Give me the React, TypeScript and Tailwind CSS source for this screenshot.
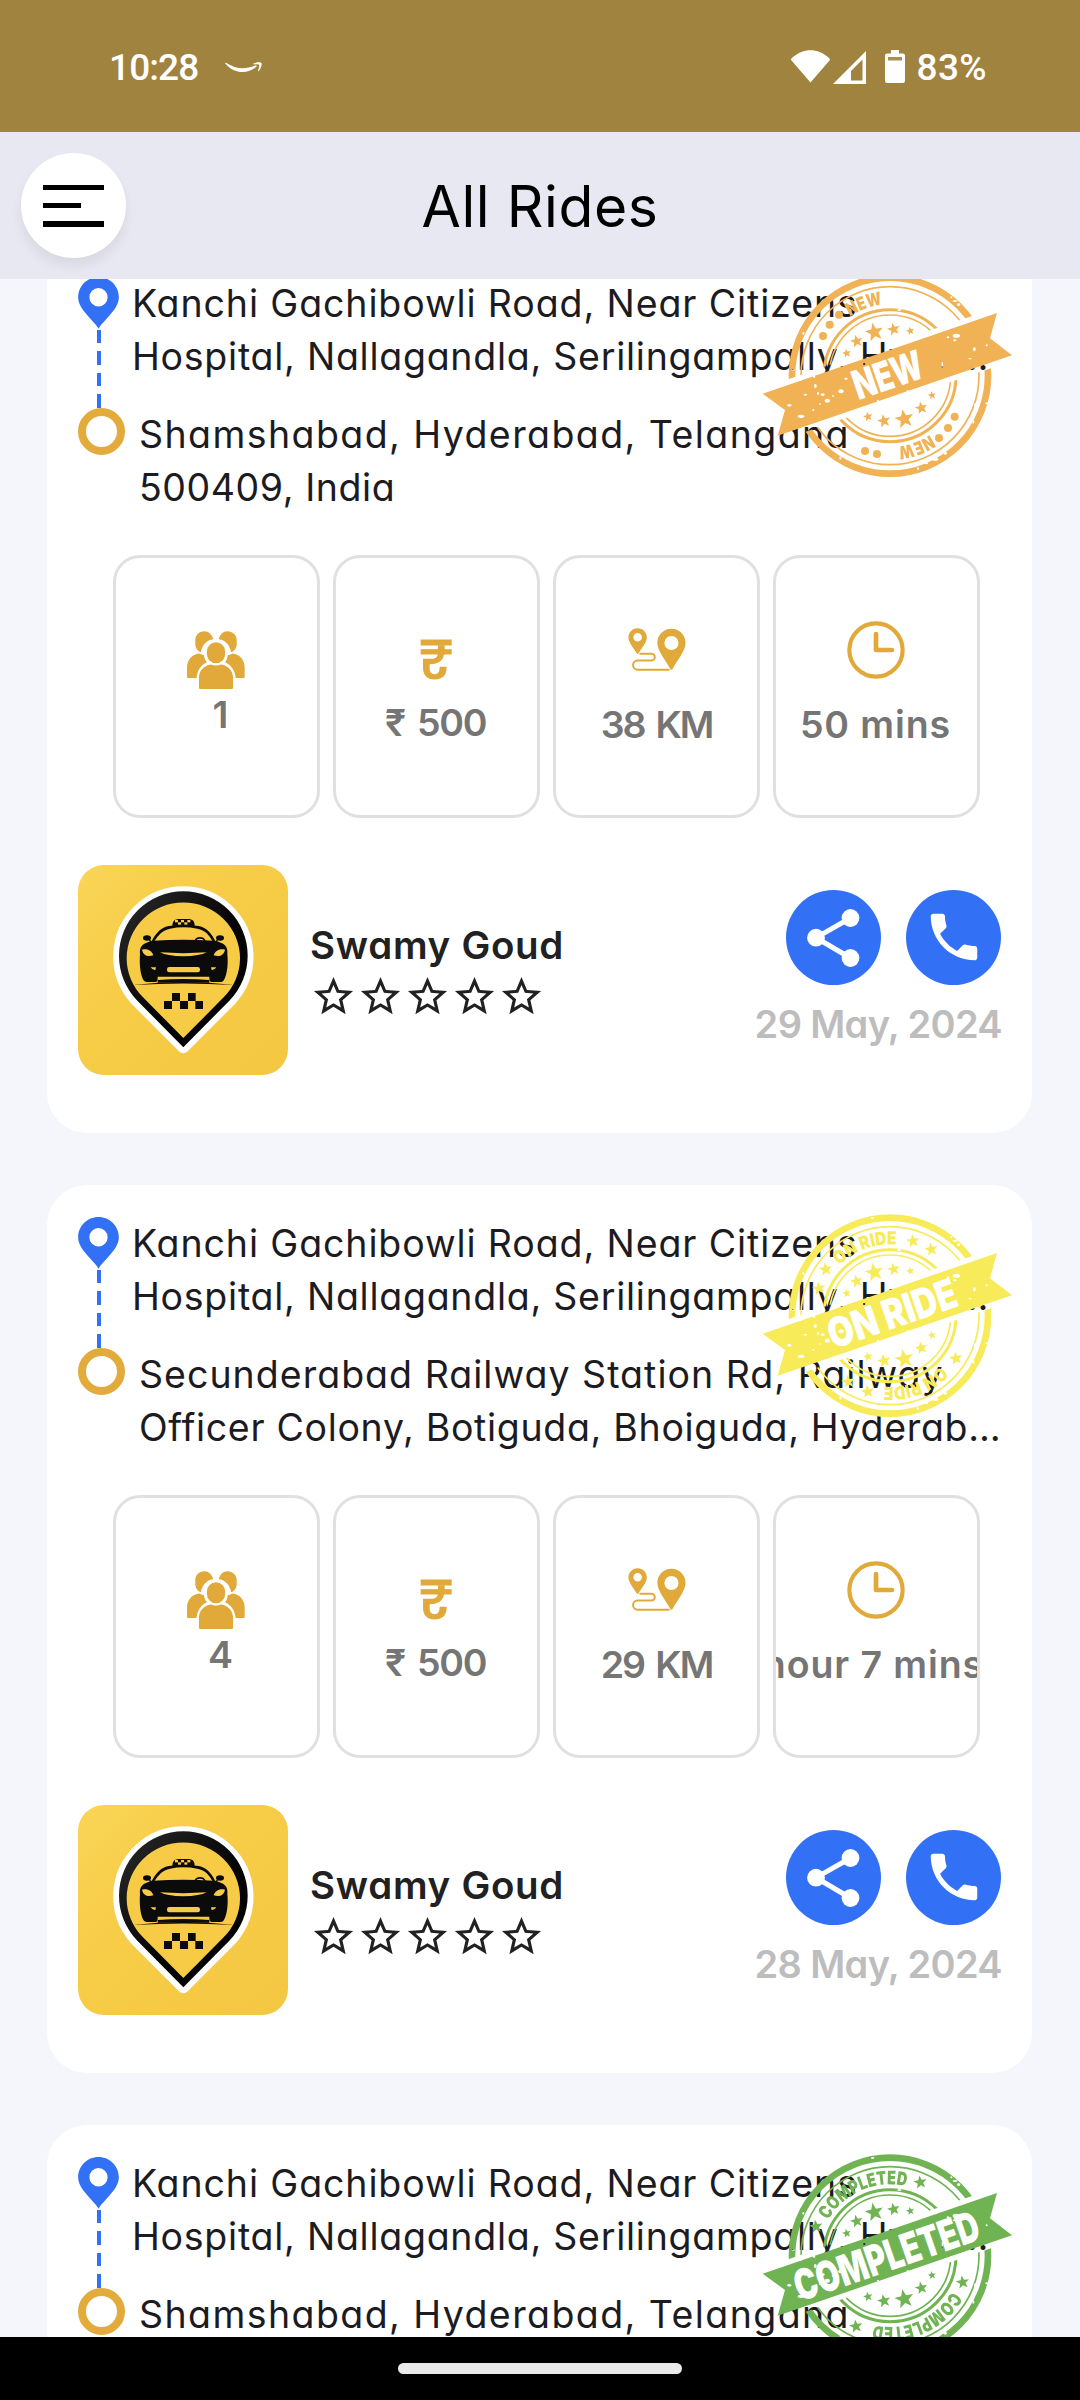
import React from 'react';

type StampKind = 'new' | 'onride' | 'completed';

interface Line {
  text: string;
  tracking: string;
}

interface Ride {
  id: string;
  stamp: StampKind;
  to: Line[];
  seats: string;
  fare: string;
  distance: Line;
  duration: Line;
  date: string;
}

const FROM: Line[] = [
  { text: 'Kanchi Gachibowli Road, Near Citizens', tracking: 'tracking-[0.89px]' },
  { text: 'Hospital, Nallagandla, Serilingampally, Hyde…', tracking: 'tracking-[0.74px]' },
];

const SHAMSHABAD: Line[] = [
  { text: 'Shamshabad, Hyderabad, Telangana', tracking: 'tracking-[1.42px]' },
  { text: '500409, India', tracking: 'tracking-[0.56px]' },
];

const RIDES: Ride[] = [
  {
    id: 'a',
    stamp: 'new',
    to: SHAMSHABAD,
    seats: '1',
    fare: '500',
    distance: { text: '38 KM', tracking: 'tracking-[-2.2px] [word-spacing:4px]' },
    duration: { text: '50 mins', tracking: 'tracking-[0.9px]' },
    date: '29 May, 2024',
  },
  {
    id: 'b',
    stamp: 'onride',
    to: [
      { text: 'Secunderabad Railway Station Rd, Railway', tracking: 'tracking-[1.02px]' },
      { text: 'Officer Colony, Botiguda, Bhoiguda, Hyderab…', tracking: 'tracking-[0.68px]' },
    ],
    seats: '4',
    fare: '500',
    distance: { text: '29 KM', tracking: 'tracking-[-2.1px] [word-spacing:4px]' },
    duration: { text: '1 hour 7 mins', tracking: 'tracking-[0.9px] self-end translate-x-[9px]' },
    date: '28 May, 2024',
  },
  {
    id: 'c',
    stamp: 'completed',
    to: SHAMSHABAD,
    seats: '1',
    fare: '500',
    distance: { text: '38 KM', tracking: 'tracking-[-2.2px] [word-spacing:4px]' },
    duration: { text: '50 mins', tracking: 'tracking-[0.9px]' },
    date: '28 May, 2024',
  },
];

/* ---------- stamp ---------- */

interface StampSpec {
  color: string;
  label: string;
  x: number;
  y: number;
  length: number;
  size: number;
  ringStart: number;
  ringSpan: number;
  ringSize: number;
  ringStars: [number, number][];
  ringDots: [number, number][];
}

const STAMPS: Record<StampKind, StampSpec> = {
  new: {
    color: '#f0b254',
    label: 'NEW',
    x: 443,
    y: 374,
    length: 216,
    size: 122,
    ringStart: -34,
    ringSpan: 28,
    ringSize: 54,
    ringStars: [],
    ringDots: [[249, 258], [269, 224], [297, 194], [597, 564], [624, 534], [644, 500], [375, 603], [411, 612]],
  },
  onride: {
    color: '#f7eb5a',
    label: 'ON RIDE',
    x: 456,
    y: 370,
    length: 402,
    size: 124,
    ringStart: -45,
    ringSpan: 50,
    ringSize: 54,
    ringStars: [[237, 295], [257, 238], [519, 153], [574, 178], [648, 505], [383, 605], [325, 575]],
    ringDots: [],
  },
  completed: {
    color: '#6fb353',
    label: 'COMPLETED',
    x: 439,
    y: 377,
    length: 580,
    size: 128,
    ringStart: -60,
    ringSpan: 73,
    ringSize: 56,
    ringStars: [[228, 290], [541, 157], [668, 457], [348, 589]],
    ringDots: [],
  },
};

const INNER_STARS: [number, number, number][] = [
  [320, 310, 14], [350, 274, 20], [403, 247, 29], [461, 238, 20], [511, 243, 13],
  [384, 500, 15], [432, 513, 21], [493, 507, 30], [544, 474, 20], [576, 436, 13],
];

const SPECKS: [number, number, number, number][] = [
  [148, 466, 6, 4], [183, 499, 10, 5], [196, 434, 5, 3], [226, 408, 4, 6], [248, 434, 6, 4], [262, 452, 8, 6],
  [181, 390, 5, 3], [222, 380, 4, 3], [234, 430, 3, 5], [279, 438, 4, 2], [303, 424, 8, 6], [318, 386, 5, 3],
  [220, 480, 3, 3], [649, 257, 11, 6], [703, 298, 4, 6], [740, 286, 3, 3], [624, 262, 4, 3], [607, 344, 2, 9],
  [690, 326, 5, 2], [644, 271, 5, 3], [414, 452, 3, 3], [503, 424, 3, 4], [372, 342, 4, 3], [240, 462, 3, 2],
  [645, 153, 7, 3], [656, 164, 5, 4], [634, 142, 3, 3], [301, 624, 3, 5], [534, 656, 3, 4], [398, 84, 5, 3],
  [586, 628, 9, 5], [740, 460, 4, 3], [700, 516, 3, 5], [560, 640, 4, 3], [478, 180, 6, 3], [190, 250, 3, 4],
  [160, 360, 4, 2], [616, 610, 5, 4], [706, 466, 4, 6],
];

function starPoints(cx: number, cy: number, r: number, turn: number) {
  return Array.from({ length: 10 }, (_, i) => {
    const a = ((i * 36 + turn) * Math.PI) / 180;
    const d = i % 2 === 0 ? r : r * 0.42;
    return `${(cx + d * Math.sin(a)).toFixed(1)},${(cy - d * Math.cos(a)).toFixed(1)}`;
  }).join(' ');
}

const BANNER = '68,431 771,189 750,265 816,316 113,557 135,480';

function Stamp({ kind, id }: { kind: StampKind; id: string }) {
  const s = STAMPS[kind];
  const at = (deg: number) => {
    const a = (deg * Math.PI) / 180;
    return `${(450 + 214 * Math.sin(a)).toFixed(1)} ${(377 - 214 * Math.cos(a)).toFixed(1)}`;
  };
  const span = (214 * s.ringSpan * Math.PI) / 180;
  const ringText = (
    <text
      fill={s.color}
      fontSize={s.ringSize}
      textLength={span}
      lengthAdjust="spacingAndGlyphs"
      className="font-['Inter'] font-black"
    >
      <textPath href={`#arc-${id}`} textLength={span} lengthAdjust="spacingAndGlyphs">
        {s.label}
      </textPath>
    </text>
  );
  return (
    <svg viewBox="0 0 900 750" className="absolute left-[693px] top-[5px] h-[250px] w-[300px]">
      <defs>
        <path id={`arc-${id}`} d={`M${at(s.ringStart)} A214 214 0 0 1 ${at(s.ringStart + 130)}`} />
        <mask id={`rings-${id}`} maskUnits="userSpaceOnUse" x="0" y="0" width="900" height="750">
          <rect width="900" height="750" fill="white" />
          <polygon points={BANNER} fill="black" stroke="black" strokeWidth="32" />
        </mask>
        <mask id={`grunge-${id}`} maskUnits="userSpaceOnUse" x="0" y="0" width="900" height="750">
          <rect width="900" height="750" fill="white" />
          {SPECKS.map(([x, y, rx, ry], i) => (
            <ellipse key={i} cx={x} cy={y} rx={rx} ry={ry} fill="black" />
          ))}
        </mask>
      </defs>
      <g mask={`url(#grunge-${id})`}>
        <g mask={`url(#rings-${id})`}>
          <g fill="none" stroke={s.color}>
            <circle cx="450" cy="377" r="294" strokeWidth="20" />
            <circle cx="450" cy="377" r="267" strokeWidth="5" />
            <circle cx="450" cy="377" r="198" strokeWidth="9" />
            <circle cx="450" cy="377" r="182" strokeWidth="5" />
          </g>
          <g fill={s.color}>
            {INNER_STARS.map(([x, y, r]) => (
              <polygon key={x} points={starPoints(x, y, r, -12)} />
            ))}
            {s.ringStars.map(([x, y]) => (
              <polygon key={x} points={starPoints(x, y, 21, -8)} />
            ))}
            {s.ringDots.map(([x, y]) => (
              <circle key={x} cx={x} cy={y} r="12" />
            ))}
          </g>
        </g>
        {ringText}
        <g transform="rotate(180 450 377)">{ringText}</g>
        <polygon points={BANNER} fill={s.color} />
      </g>
      <text
        transform={`translate(${s.x} ${s.y}) rotate(-19)`}
        y={s.size * 0.363}
        textAnchor="middle"
        textLength={s.length}
        lengthAdjust="spacingAndGlyphs"
        fontSize={s.size}
        fill="white"
        className="font-['Inter'] font-black"
      >
        {s.label}
      </text>
    </svg>
  );
}

/* ---------- icons ---------- */

function PinIcon() {
  return (
    <svg viewBox="0 0 41 52" className="h-[52px] w-[41px]">
      <path
        fill="#3270f6"
        fillRule="evenodd"
        d="M20.5 0C9 0 0 9.2 0 20.5C0 28 5 34 11 40.5C15.5 45.5 18.5 48.5 20.5 52C22.5 48.5 25.5 45.5 30 40.5C36 34 41 28 41 20.5C41 9.2 32 0 20.5 0ZM20.5 11.2a9.2 9.2 0 1 1 0 18.4a9.2 9.2 0 1 1 0-18.4Z"
      />
    </svg>
  );
}

function PeopleIcon() {
  return (
    <svg viewBox="261 272 175 175" className="h-[58px] w-[58px] shrink-0" fill="#e0a93a">
      <path d="M313 273C298 273 286 284 286 299V311C286 323 293 333 303 336C306 316 320 299 340 297C337 283 326 273 313 273Z" />
      <path d="M383 273C398 273 411 284 411 299V311C411 323 404 333 394 336C391 316 377 299 357 297C360 283 370 273 383 273Z" />
      <path d="M298 340C276 342 261 360 261 382V411Q261 414 264 414H290C291 392 303 374 321 366C316 359 313 352 312 345Q305 344 298 340Z" />
      <path d="M399 340C420 342 435 360 435 382V411Q435 414 432 414H408C406 392 394 374 376 366C381 359 383 352 384 345Q392 344 399 340Z" />
      <rect x="321" y="306" width="55" height="63" rx="27.5" />
      <path d="M333 373Q348 379 364 373C385 376 400 392 400 414V443Q400 447 396 447H301Q297 447 297 443V414C297 392 312 376 333 373Z" />
    </svg>
  );
}

function RupeeIcon() {
  return (
    <svg viewBox="961 297 96 122" className="h-[41px] w-[32px] shrink-0" fill="#e0a93a">
      <rect x="963" y="298" width="93" height="18" />
      <rect x="963" y="327" width="93" height="16" />
      <path d="M1015 315H1035V342H1033C1030 361 1018 371 990 372V385C990 396 996 402 1005 402C1014 402 1020 396 1020 380H1041C1041 405 1030 418 1005 418C982 418 970 405 970 382V356H992C1006 356 1013 352 1014 342H1015Z" />
    </svg>
  );
}

function RouteIcon() {
  return (
    <svg viewBox="260 263 176 131" className="h-[43px] w-[58px] shrink-0" fill="#e0a93a">
      <path
        fillRule="evenodd"
        d="M289 264C273 264 261 276 261 292C261 307 278 326 286 340Q289 344 292 340C300 326 317 307 317 292C317 276 305 264 289 264ZM289 278a13 13 0 1 1 0 26a13 13 0 1 1 0-26Z"
      />
      <path
        fillRule="evenodd"
        d="M392 265C368 265 349 284 349 308C349 333 376 364 388 387Q392 393 396 387C408 364 435 333 435 308C435 284 416 265 392 265ZM392 287a21.5 21.5 0 1 1 0 43a21.5 21.5 0 1 1 0-43Z"
      />
      <path
        d="M297 341.5H331a10 10 0 0 1 0 20.5H289a14 14 0 0 0 0 28H384"
        fill="none"
        stroke="#e0a93a"
        strokeWidth="6"
        strokeLinecap="round"
      />
    </svg>
  );
}

function ClockIcon() {
  return (
    <svg viewBox="923 242 173 173" className="h-[58px] w-[58px] shrink-0" fill="none" stroke="#e0a93a">
      <circle cx="1009.5" cy="328.5" r="79.5" strokeWidth="12.5" />
      <path d="M1009.5 281V328.5H1057" strokeWidth="14" strokeLinecap="round" strokeLinejoin="round" />
    </svg>
  );
}

function StarOutline() {
  return (
    <svg viewBox="0 0 24 24" className="size-[47px] shrink-0" fill="#212121">
      <path d="M22 9.24l-7.19-.62L12 2 9.19 8.63 2 9.24l5.46 4.73L5.82 21 12 17.27 18.18 21l-1.63-7.03L22 9.24zM12 15.4l-3.76 2.27 1-4.28-3.32-2.88 4.38-.38L12 6.1l1.71 4.04 4.38.38-3.32 2.88 1 4.28L12 15.4z" />
    </svg>
  );
}

function TaxiAvatar({ id }: { id: string }) {
  return (
    <div className="size-[210px] overflow-hidden rounded-[26px] bg-linear-to-br from-[#f9d557] via-[#f7cc47] via-40% to-[#f4c741]">
      <svg viewBox="-66 -45 630 630" className="size-full">
        <defs>
          <linearGradient id={`ink-${id}`} x1="0" y1="0" x2="1" y2="1">
            <stop offset="0" stopColor="#2b2b2b" />
            <stop offset="0.55" stopColor="#050505" />
            <stop offset="1" stopColor="#000" />
          </linearGradient>
        </defs>
        <path
          d="M250 502L106 358A193 193 0 1 1 394 358Z"
          fill="#fff"
          stroke="#fff"
          strokeWidth="35"
          strokeLinejoin="round"
        />
        <path d="M250 502L112 362A193 193 0 1 1 388 362Z" fill={`url(#ink-${id})`} />
        <path d="M250 474L129 352A170 167 0 1 1 371 352Z" fill="#f7cb46" />
        <g fill="#0b0b0b">
          <path d="M120 222C118 206 124 196 136 190Q146 184 160 182Q250 177 341 182Q356 184 366 190C378 196 384 206 382 222C385 250 382 282 372 300Q369 306 362 306H338Q328 306 328 296V290H173V296Q173 306 164 306H141Q134 306 130 300C120 282 118 250 120 222Z" />
          <path d="M154 186C166 162 182 142 206 138C236 134 266 134 296 138C320 142 336 162 347 186L338 184C328 166 316 150 292 146Q250 138 210 146C188 150 174 166 163 184Z" />
          <ellipse cx="141" cy="174" rx="12" ry="8" />
          <ellipse cx="360" cy="174" rx="12" ry="8" />
          <path d="M146 178L157 184L150 187Z" />
          <path d="M355 178L344 184L351 187Z" />
          <path d="M217 140C217 124 222 117 240 117H262C280 117 284 124 284 140Z" />
          <path d="M283 184a17 13 0 0 1 34 0h-5a12 8 0 0 0-24 0Z" />
          <path d="M173 300Q250 294 328 300V308H173Z" />
          <path d="M100 315Q250 297 402 315Q250 306 100 315Z" />
        </g>
        <g fill="#f7cb46">
          <path d="M126 209C142 204 156 212 160 226C144 230 130 228 126 209Z" />
          <path d="M375 209C359 204 345 212 341 226C357 230 371 228 375 209Z" />
          <path d="M180 217Q250 222 320 217Q300 228 250 229Q200 228 180 217Z" />
          <rect x="201" y="261" width="99" height="16" rx="7" />
          <path d="M152 262H168L166 270Q158 271 152 262Z" />
          <path d="M349 262H333L335 270Q343 271 349 262Z" />
          <rect x="225" y="120" width="9" height="7" />
          <rect x="243" y="120" width="9" height="7" />
          <rect x="262" y="120" width="9" height="7" />
          <rect x="234" y="127" width="9" height="7" />
          <rect x="253" y="127" width="9" height="7" />
        </g>
        <g fill="#0b0b0b">
          <rect x="216" y="339" width="24" height="24" />
          <rect x="264" y="339" width="23" height="24" />
          <rect x="192" y="363" width="24" height="24" />
          <rect x="240" y="363" width="24" height="24" />
          <rect x="286" y="363" width="23" height="24" />
        </g>
      </svg>
    </div>
  );
}

/* ---------- pieces ---------- */

function Lines({ lines }: { lines: Line[] }) {
  return (
    <div className="text-[37.5px] leading-[53px] text-[#1c1b1f]">
      {lines.map((l) => (
        <div key={l.text} className={`whitespace-nowrap ${l.tracking}`}>
          {l.text}
        </div>
      ))}
    </div>
  );
}

function StatBox({ pad, children }: { pad: string; children: React.ReactNode }) {
  return (
    <div
      className={`flex h-[263px] w-[207px] flex-col items-center overflow-hidden rounded-[27px] border-[3px] border-[#e0e0e0] text-[37.5px] leading-[48px] font-[560] whitespace-nowrap text-[#757575] ${pad}`}
    >
      {children}
    </div>
  );
}

function RideCard({ ride }: { ride: Ride }) {
  return (
    <article className="relative h-[888px] shrink-0 rounded-[40px] bg-white pt-[32px] pr-[32px] pl-[31px]">
      <div className="flex h-[131px]">
        <div className="flex w-[54px] shrink-0 flex-col">
          <PinIcon />
          <div className="mt-px ml-[19px] flex w-1 flex-col gap-2">
            <i className="h-[13.6px] bg-[#3270f6]" />
            <i className="h-[13.6px] bg-[#3270f6]" />
            <i className="h-[13.6px] bg-[#3270f6]" />
            <i className="h-[13.6px] bg-[#3270f6]" />
          </div>
        </div>
        <Lines lines={FROM} />
      </div>
      <div className="flex h-[106px]">
        <div className="w-[61px] shrink-0">
          <div className="size-[47px] rounded-full border-8 border-[#e3aa3c]" />
        </div>
        <Lines lines={ride.to} />
      </div>

      <div className="mt-[41px] ml-[35px] flex gap-[13px]">
        <StatBox pad="pt-[73px] pr-[2px]">
          <PeopleIcon />
          <span className="mt-[2px] ml-[10px]">{ride.seats}</span>
        </StatBox>
        <StatBox pad="pt-[81px] pr-[2px]">
          <RupeeIcon />
          <span className="mt-[19px] flex gap-[11px]">
            <span>₹</span>
            <span className="tracking-[-1.3px]">{ride.fare}</span>
          </span>
        </StatBox>
        <StatBox pad="pt-[70px]">
          <RouteIcon />
          <span className={`mt-[30px] ${ride.distance.tracking}`}>{ride.distance.text}</span>
        </StatBox>
        <StatBox pad="pt-[63px] pr-[2px]">
          <ClockIcon />
          <span className={`mt-[22px] ${ride.duration.tracking}`}>{ride.duration.text}</span>
        </StatBox>
      </div>

      <div className="mt-[47px] flex">
        <TaxiAvatar id={ride.id} />
        <div className="ml-[22px] flex flex-col pt-[56px]">
          <span className="text-[38.5px] leading-[48px] font-[560] tracking-[0.7px] text-[#212121]">Swamy Goud</span>
          <div className="mt-[4px] flex">
            {[0, 1, 2, 3, 4].map((n) => (
              <StarOutline key={n} />
            ))}
          </div>
        </div>
        <div className="-mr-px ml-auto flex flex-col items-end pt-[24.5px]">
          <div className="flex gap-[25px]">
            <button className="flex size-[95px] items-center justify-center rounded-full bg-[#3270f6]">
              <svg viewBox="0 0 95 95" className="size-full" fill="#fff" stroke="#fff">
                <path d="M64.5 28L30 47.7L64.5 68" fill="none" strokeWidth="5" />
                <g stroke="none">
                  <circle cx="64.5" cy="28" r="8.9" />
                  <circle cx="30" cy="47.7" r="8.9" />
                  <circle cx="64.5" cy="68" r="8.9" />
                </g>
              </svg>
            </button>
            <button className="flex size-[95px] items-center justify-center rounded-full bg-[#3270f6]">
              <svg viewBox="0 0 24 24" className="size-[62px]" fill="#fff">
                <path d="M6.62 10.79c1.44 2.83 3.76 5.14 6.59 6.59l2.2-2.2c.27-.27.67-.36 1.02-.24 1.12.37 2.33.57 3.57.57.55 0 1 .45 1 1V20c0 .55-.45 1-1 1-9.39 0-17-7.61-17-17 0-.55.45-1 1-1h3.5c.55 0 1 .45 1 1 0 1.25.2 2.45.57 3.57.11.35.03.74-.25 1.02l-2.2 2.2z" />
              </svg>
            </button>
          </div>
          <span className="mt-[15.5px] -mr-px text-[38px] leading-[48px] font-[560] tracking-[-0.65px] text-[#bdbdbd]">{ride.date}</span>
        </div>
      </div>

      <Stamp kind={ride.stamp} id={ride.id} />
    </article>
  );
}

function StatusBar() {
  return (
    <div className="flex h-[132px] shrink-0 items-center bg-[#9f833f] pr-[93px] pl-[109px] font-['Roboto'] text-[37px] leading-[44px] font-medium text-white">
      <span className="pt-[3px] tracking-[-0.9px]">10:28</span>
      <svg viewBox="0 0 37 11" className="ml-[27px] mt-[3px] h-[11px] w-[37px]" fill="#fff">
        <path d="M0 1.2Q.5.3 1.5 1C11 7.5 21 7.5 30 3.5Q32.5 3 31.5 4.8C22 12.5 9 12 0 1.2Z" />
        <path d="M28.5 1.5C31 0 35.5-.4 36.6 1C37 4 35.5 7.5 33.5 9.2Q32.6 9.6 33 8.4C34 6 34.5 3.5 34 2.6Q32 2 28.5 2.5Z" />
      </svg>
      <div className="ml-auto flex items-center">
        <svg viewBox="0 0 39 33" className="h-[33px] w-[39px]" fill="#fff">
          <path d="M19.5 32.5L.3 10.2Q-.3 9 .9 8C12-2.4 27-2.4 38.1 8Q39.3 9 38.7 10.2Z" />
        </svg>
        <svg viewBox="0 0 33 33" className="ml-[3px] mt-[2px] h-[33px] w-[33px]" fill="#fff">
          <path fillRule="evenodd" d="M0 33L33 0V33ZM18 29.5H29.5V8.5L18 20Z" />
        </svg>
        <svg viewBox="0 0 20 33" className="ml-[19px] h-[33px] w-[20px]" fill="#fff">
          <path d="M6 0H14V3.5H18Q20 3.5 20 5.5V31Q20 33 18 33H2Q0 33 0 31V5.5Q0 3.5 2 3.5H6Z" />
          <rect x="3" y="7" width="14" height="3.5" fill="#9f833f" opacity="0.9" />
        </svg>
        <span className="ml-[11px] pt-[3px] tracking-[0.4px]">83%</span>
      </div>
    </div>
  );
}

export default function App() {
  return (
    <div className="flex h-[2400px] w-[1080px] flex-col overflow-hidden bg-[#f5f6fb] font-['Inter',sans-serif] [font-feature-settings:'cv11']">
      <StatusBar />
      <header className="relative flex h-[147px] shrink-0 items-center justify-center bg-[#e8e8f2]">
        <button className="absolute top-[21px] left-[21px] flex size-[105px] flex-col justify-center rounded-full bg-white pl-[22px] shadow-[0_8px_12px_rgba(0,0,0,0.07)]">
          <i className="h-[5px] w-[61px] bg-black" />
          <i className="mt-[13px] h-[5px] w-[38px] bg-black" />
          <i className="mt-[13px] h-[6px] w-[61px] bg-black" />
        </button>
        <h1 className="pt-[3px] text-[57px] leading-[66px] tracking-[0.6px] text-black">All Rides</h1>
      </header>
      <main className="min-h-0 flex-1 overflow-hidden pr-[48px] pl-[47px]">
        <div className="-mt-[34px] flex flex-col gap-[52px]">
          {RIDES.map((ride) => (
            <RideCard key={ride.id} ride={ride} />
          ))}
        </div>
      </main>
      <nav className="flex h-[63px] shrink-0 justify-center bg-black pt-[26px]">
        <div className="h-[11px] w-[284px] rounded-full bg-[#eaeaea]" />
      </nav>
    </div>
  );
}
